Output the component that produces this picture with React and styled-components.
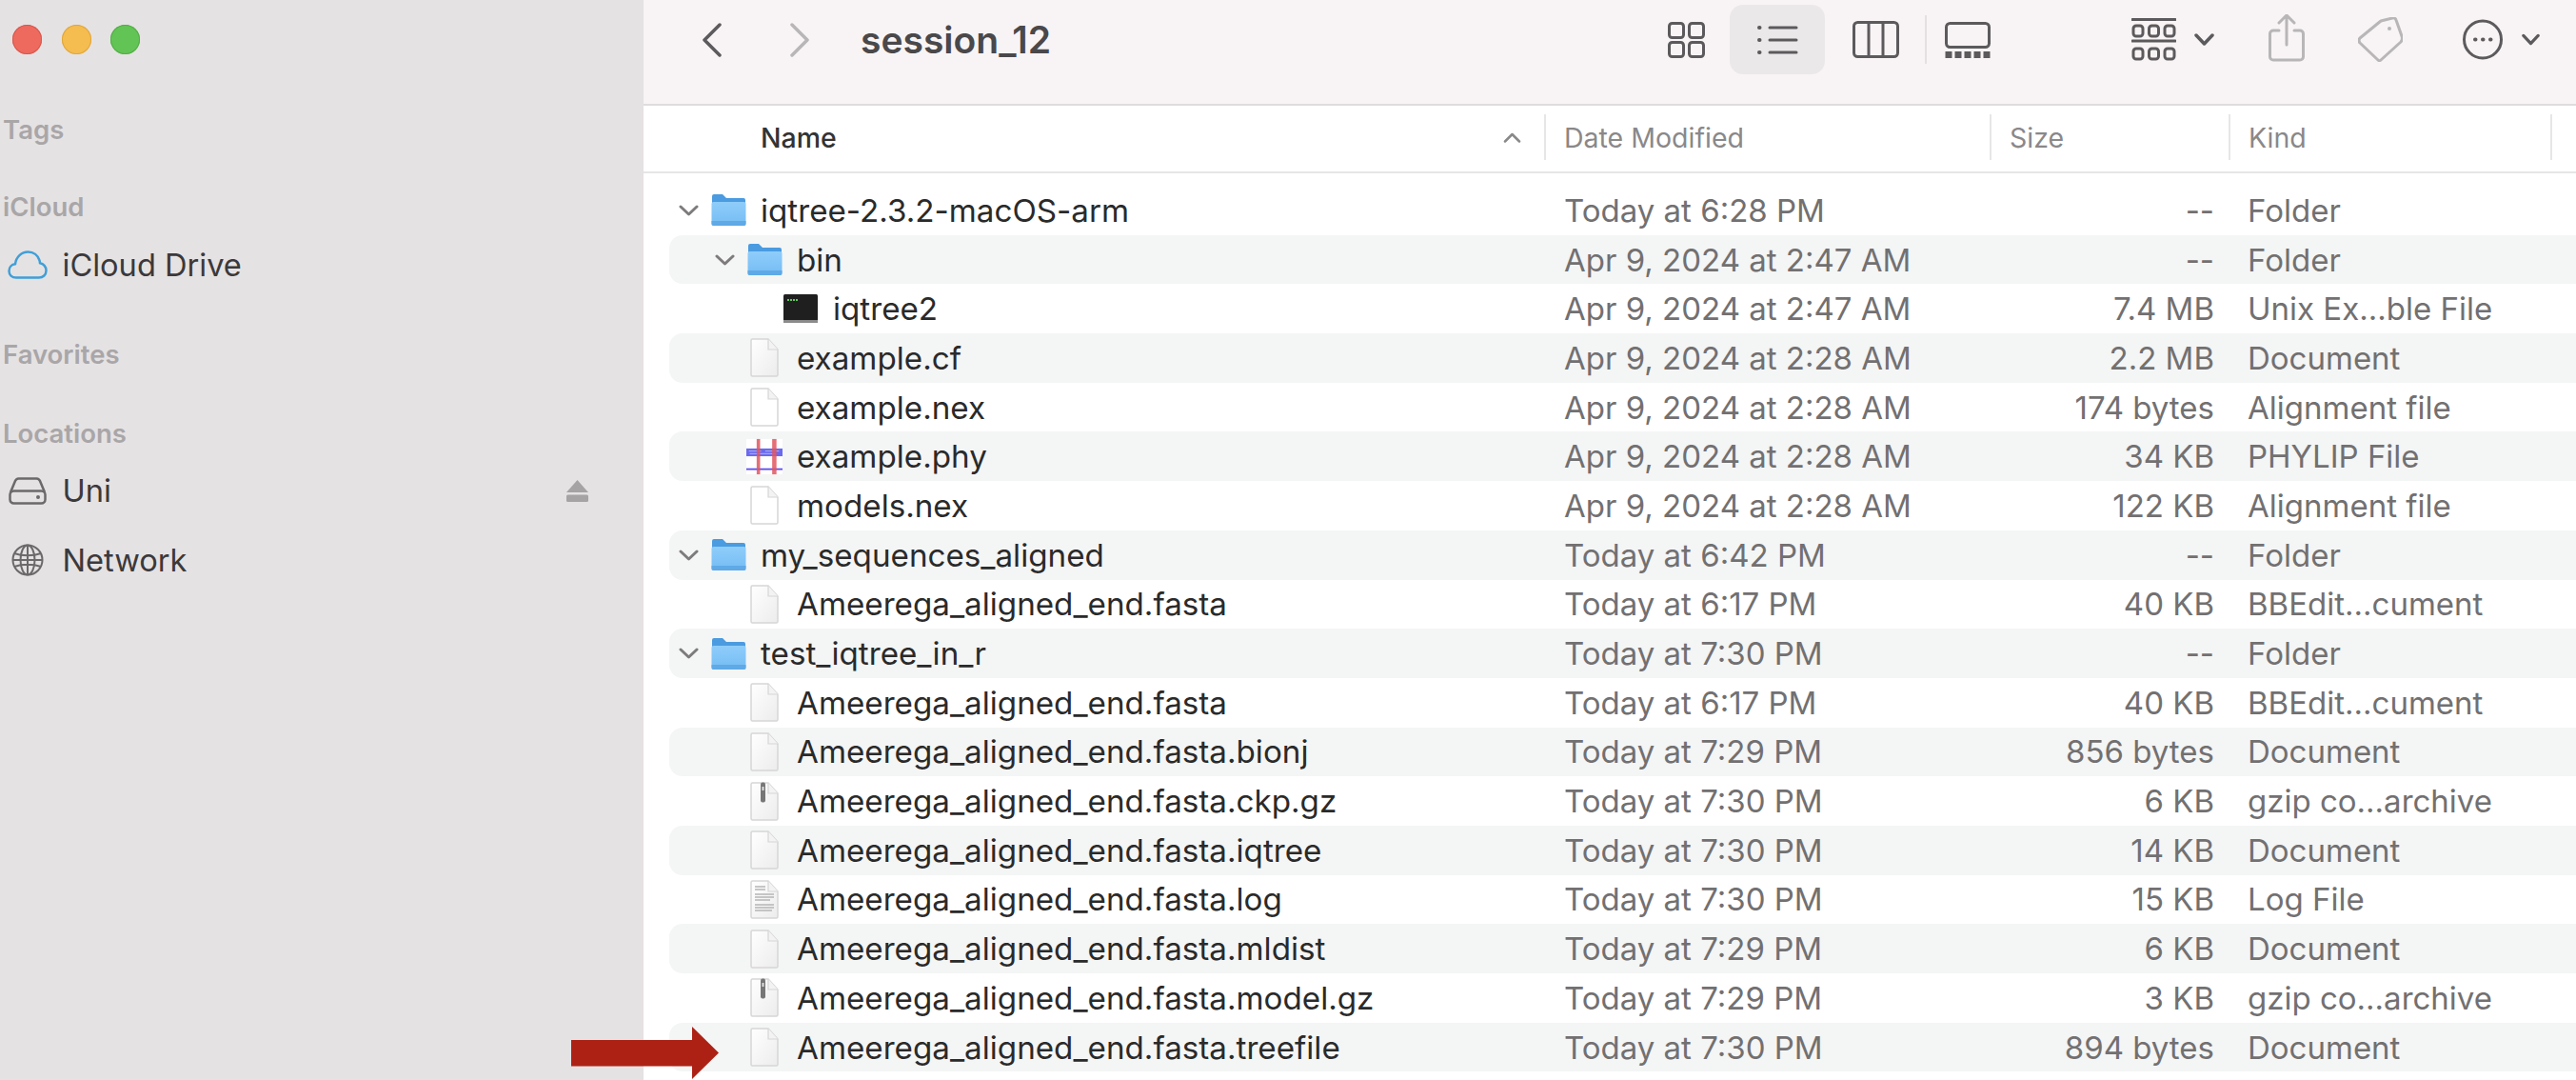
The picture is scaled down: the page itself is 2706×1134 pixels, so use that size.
import styled, { createGlobalStyle } from "styled-components";

const GlobalStyle = createGlobalStyle`
  html, body {
    margin: 0;
    padding: 0;
    height: 100%;
    overflow: hidden;
    background: #fff;
    font-family: Inter, "Liberation Sans", sans-serif;
  }
`;

const Window = styled.div`
  position: relative;
  display: flex;
  width: 2706px;
  height: 1134px;
  overflow: hidden;
`;

const Sidebar = styled.aside`
  flex: 0 0 676px;
  background: #e5e2e3;
`;

const Lights = styled.div`
  display: flex;
  gap: 20.5px;
  padding: 26px 0 0 13px;
`;

const Light = styled.span`
  width: 31px;
  height: 31px;
  border-radius: 50%;
  background: ${(props) => props.$color};
  box-shadow: inset 0 0 0 1px ${(props) => props.$edge};
`;

const SideLabel = styled.div`
  margin-top: ${(props) => props.$top}px;
  padding-left: 3px;
  line-height: 40px;
  font-size: 27.5px;
  font-weight: 600;
  color: #a9a6a8;
`;

const SideItem = styled.div`
  display: flex;
  align-items: center;
  height: 50px;
  margin-top: ${(props) => props.$top}px;
  padding-right: 58px;
  font-size: 32.6px;
  color: #3b393b;
`;

const SideIconSlot = styled.span`
  display: flex;
  justify-content: center;
  width: 57px;
  margin-right: 8.5px;
`;

const Eject = styled.svg`
  margin-left: auto;
`;

const Main = styled.main`
  flex: 1;
  min-width: 0;
`;

const Toolbar = styled.header`
  display: flex;
  align-items: center;
  box-sizing: border-box;
  height: 111px;
  padding: 0 38px 26px 61px;
  background: #f8f4f5;
  border-bottom: 2px solid #dfdcdd;
`;

const Title = styled.h1`
  margin: 0 auto 0 53px;
  font-size: 39px;
  font-weight: 600;
  color: #4a484a;
`;

const ToolIcon = styled.svg`
  flex: none;
  margin-left: ${(props) => props.$left || 0}px;
  fill: none;
  stroke: ${(props) => (props.$dim ? "#b8b6b7" : "#5c5a5c")};
  stroke-width: 3;
  stroke-linecap: round;
  stroke-linejoin: round;
`;

const ActiveTool = styled.div`
  display: flex;
  align-items: center;
  justify-content: center;
  width: 100px;
  height: 73px;
  margin-left: 26px;
  border-radius: 14px;
  background: #ebe8e9;
`;

const ToolDivider = styled.span`
  width: 2px;
  height: 51px;
  margin-left: 27px;
  background: #e3e0e1;
`;

const ColumnHeader = styled.div`
  display: flex;
  align-items: center;
  box-sizing: border-box;
  height: 71px;
  padding-bottom: 3px;
  border-bottom: 2px solid #e6e6e6;
`;

const HeadCell = styled.div`
  display: flex;
  align-items: center;
  box-sizing: border-box;
  width: ${(props) => props.$width}px;
  height: 48px;
  padding-left: ${(props) => props.$pad}px;
  border-left: ${(props) => (props.$first ? "none" : "2px solid #e6e6e6")};
  font-size: 28.5px;
  font-weight: ${(props) => (props.$active ? 500 : 400)};
  color: ${(props) => (props.$active ? "#333" : "#8a8889")};
`;

const SortArrow = styled.svg`
  margin-left: auto;
  margin-right: 24px;
`;

const List = styled.div`
  padding: 13px 0 0 27px;
`;

const Row = styled.div`
  display: grid;
  grid-template-columns: 940px 467px 216px 1fr;
  align-items: center;
  height: 51.7px;
  border-radius: 14px 0 0 14px;
  background: ${(props) => (props.$striped ? "#f4f5f5" : "transparent")};
  font-size: 33px;
  color: #727071;
`;

const NameCell = styled.div`
  display: flex;
  align-items: center;
  padding-left: ${(props) => 10 + props.$depth * 38}px;
  font-size: 33.2px;
  color: #2a2a2a;
`;

const ChevronSlot = styled.span`
  display: flex;
  width: 33px;
`;

const IconSlot = styled.span`
  display: flex;
  justify-content: center;
  width: 38px;
  margin-right: 15px;
`;

const SizeCell = styled.div`
  text-align: right;
`;

const KindCell = styled.div`
  padding-left: 35px;
`;

const Pointer = styled.svg`
  position: absolute;
  left: 600px;
  top: 1078px;
`;

const rows = [
  { depth: 0, name: "iqtree-2.3.2-macOS-arm", icon: "folder", date: "Today at 6:28 PM", size: "--", kind: "Folder" },
  { depth: 1, name: "bin", icon: "folder", date: "Apr 9, 2024 at 2:47 AM", size: "--", kind: "Folder" },
  { depth: 2, name: "iqtree2", icon: "exec", date: "Apr 9, 2024 at 2:47 AM", size: "7.4 MB", kind: "Unix Ex...ble File" },
  { depth: 1, name: "example.cf", icon: "shaded", date: "Apr 9, 2024 at 2:28 AM", size: "2.2 MB", kind: "Document" },
  { depth: 1, name: "example.nex", icon: "plain", date: "Apr 9, 2024 at 2:28 AM", size: "174 bytes", kind: "Alignment file" },
  { depth: 1, name: "example.phy", icon: "thumb", date: "Apr 9, 2024 at 2:28 AM", size: "34 KB", kind: "PHYLIP File" },
  { depth: 1, name: "models.nex", icon: "plain", date: "Apr 9, 2024 at 2:28 AM", size: "122 KB", kind: "Alignment file" },
  { depth: 0, name: "my_sequences_aligned", icon: "folder", date: "Today at 6:42 PM", size: "--", kind: "Folder" },
  { depth: 1, name: "Ameerega_aligned_end.fasta", icon: "shaded", date: "Today at 6:17 PM", size: "40 KB", kind: "BBEdit...cument" },
  { depth: 0, name: "test_iqtree_in_r", icon: "folder", date: "Today at 7:30 PM", size: "--", kind: "Folder" },
  { depth: 1, name: "Ameerega_aligned_end.fasta", icon: "shaded", date: "Today at 6:17 PM", size: "40 KB", kind: "BBEdit...cument" },
  { depth: 1, name: "Ameerega_aligned_end.fasta.bionj", icon: "shaded", date: "Today at 7:29 PM", size: "856 bytes", kind: "Document" },
  { depth: 1, name: "Ameerega_aligned_end.fasta.ckp.gz", icon: "zip", date: "Today at 7:30 PM", size: "6 KB", kind: "gzip co...archive" },
  { depth: 1, name: "Ameerega_aligned_end.fasta.iqtree", icon: "shaded", date: "Today at 7:30 PM", size: "14 KB", kind: "Document" },
  { depth: 1, name: "Ameerega_aligned_end.fasta.log", icon: "log", date: "Today at 7:30 PM", size: "15 KB", kind: "Log File" },
  { depth: 1, name: "Ameerega_aligned_end.fasta.mldist", icon: "shaded", date: "Today at 7:29 PM", size: "6 KB", kind: "Document" },
  { depth: 1, name: "Ameerega_aligned_end.fasta.model.gz", icon: "zip", date: "Today at 7:29 PM", size: "3 KB", kind: "gzip co...archive" },
  { depth: 1, name: "Ameerega_aligned_end.fasta.treefile", icon: "shaded", date: "Today at 7:30 PM", size: "894 bytes", kind: "Document" },
];

function FolderIcon() {
  return (
    <svg width="37" height="35" viewBox="0 0 37 35">
      <defs>
        <linearGradient id="folderBody" x1="0" y1="0" x2="0" y2="1">
          <stop offset="0" stopColor="#8fcdfa" />
          <stop offset="1" stopColor="#74bcf4" />
        </linearGradient>
      </defs>
      <path d="M1 9V3a2 2 0 0 1 2-2h9l4 4h18a2 2 0 0 1 2 2v4H1z" fill="#4a9be0" />
      <rect x="0.5" y="9" width="36" height="25" rx="2" fill="url(#folderBody)" />
      <path d="M.5 29h36v3a2 2 0 0 1-2 2h-32a2 2 0 0 1-2-2z" fill="#5ea9e6" />
    </svg>
  );
}

function ExecIcon() {
  return (
    <svg width="36" height="30" viewBox="0 0 36 30">
      <rect x="0" y="0" width="36" height="30" rx="1.5" fill="#1f1f1f" />
      <rect x="0" y="27" width="36" height="3" fill="#8b8b8b" />
      <path d="M4 6h11" stroke="#5fc85a" strokeWidth="2" strokeDasharray="2 1" />
    </svg>
  );
}

function ThumbIcon() {
  return (
    <svg width="42" height="41" viewBox="0 0 42 41">
      <rect width="42" height="41" fill="#fff" />
      <rect y="11" width="42" height="9" fill="#6a6af0" />
      <path d="M3 14h14M22 14h16M4 17h30" stroke="#b9b9f5" strokeWidth="1" />
      <rect y="34" width="42" height="2" fill="#5a4cf0" />
      <rect x="12" width="4" height="41" fill="#e0565e" opacity="0.85" />
      <rect x="30" width="5" height="41" fill="#e0565e" opacity="0.85" />
    </svg>
  );
}

function DocIcon({ kind }) {
  const fillId = `doc-${kind}`;
  return (
    <svg width="32" height="41" viewBox="0 0 32 41">
      <defs>
        <linearGradient id={fillId} x1="0" y1="0" x2="1" y2="1">
          <stop offset="0" stopColor="#fff" />
          <stop offset="1" stopColor={kind === "plain" ? "#fff" : "#ececec"} />
        </linearGradient>
      </defs>
      <path
        d="M2 2.500a1.500 1.500 0 0 1 1.500-1.500H20l10 11v26.500a1.500 1.500 0 0 1-1.500 1.500h-25A1.500 1.500 0 0 1 2 38.500z"
        fill={`url(#${fillId})`}
        stroke="#d6d6d6"
        strokeWidth="1.5"
      />
      <path d="M20 1v11h10" fill="#f3f3f3" stroke="#d6d6d6" strokeWidth="1.200" />
      {kind === "zip" && (
        <>
          <rect x="12" y="0.500" width="5" height="21" rx="2" fill="#777" />
          <rect x="13.500" y="5" width="2" height="4" fill="#ddd" />
        </>
      )}
      {kind === "log" && (
        <path
          d="M6 7h11M6 10h11M6 15h20M6 18h20M6 21h16M6 26h20M6 29h20M6 32h18"
          stroke="#b5b5b5"
          strokeWidth="1.500"
        />
      )}
    </svg>
  );
}

function RowIcon({ icon }) {
  if (icon === "folder") return <FolderIcon />;
  if (icon === "exec") return <ExecIcon />;
  if (icon === "thumb") return <ThumbIcon />;
  return <DocIcon kind={icon} />;
}

function Disclosure() {
  return (
    <svg width="21" height="12" viewBox="0 0 21 12" fill="none" stroke="#7d7b7c" strokeWidth="3" strokeLinecap="round" strokeLinejoin="round">
      <path d="M2 2l8.500 8L19 2" />
    </svg>
  );
}

function ToolChevron({ left, width }) {
  return (
    <ToolIcon $left={left} width={width} height="13" viewBox="0 0 21 13">
      <path d="M2 2l8.500 9L19 2" strokeWidth="3.500" />
    </ToolIcon>
  );
}

export default function App() {
  return (
    <Window>
      <GlobalStyle />
      <Sidebar>
        <Lights>
          <Light $color="#ee6a5f" $edge="#d8574c" />
          <Light $color="#f5bd4f" $edge="#dfa63c" />
          <Light $color="#61c454" $edge="#52ad46" />
        </Lights>
        <SideLabel $top={59}>Tags</SideLabel>
        <SideLabel $top={41}>iCloud</SideLabel>
        <SideItem $top={16}>
          <SideIconSlot>
            <svg width="42" height="30" viewBox="0 0 42 30" fill="none" stroke="#3f9fd8" strokeWidth="2.500" strokeLinejoin="round">
              <path d="M9 28.500C4.500 28.500 1.500 25.500 1.500 21.500c0-3.800 2.800-6.800 6.500-7.200C8.800 7 14.500 1.500 21.500 1.500c5.800 0 10.400 3.700 12 8.800 .3 1 .4 2 .5 3 3.700.5 6.500 3.800 6.500 7.700 0 4.700-3.500 7.500-7.500 7.500z" />
            </svg>
          </SideIconSlot>
          iCloud Drive
        </SideItem>
        <SideLabel $top={49}>Favorites</SideLabel>
        <SideLabel $top={43}>Locations</SideLabel>
        <SideItem $top={15}>
          <SideIconSlot>
            <svg width="40" height="29" viewBox="0 0 40 29" fill="none" stroke="#6b696a" strokeWidth="2.500" strokeLinejoin="round">
              <path d="M2 16L7 4a4 4 0 0 1 3.500-2.500h19A4 4 0 0 1 33 4l5 12" />
              <rect x="1.500" y="14.500" width="37" height="13" rx="4" />
              <circle cx="31" cy="21" r="2" fill="#6b696a" stroke="none" />
            </svg>
          </SideIconSlot>
          Uni
          <Eject width="23" height="23" viewBox="0 0 23 23" fill="#a5a3a4">
            <path d="M11.500 0L23 13H0z" />
            <rect y="15.500" width="23" height="7.500" rx="1.500" />
          </Eject>
        </SideItem>
        <SideItem $top={23}>
          <SideIconSlot>
            <svg width="34" height="34" viewBox="0 0 34 34" fill="none" stroke="#6b696a" strokeWidth="2">
              <circle cx="17" cy="17" r="15.500" />
              <ellipse cx="17" cy="17" rx="7.500" ry="15.500" />
              <path d="M17 1.500v31M3 10c8 3 20 3 28 0M3 24c8-3 20-3 28 0M1.500 17h31" />
            </svg>
          </SideIconSlot>
          Network
        </SideItem>
      </Sidebar>
      <Main>
        <Toolbar>
          <ToolIcon width="21" height="36" viewBox="0 0 21 36">
            <path d="M19 2L3 18l16 16" strokeWidth="3.500" />
          </ToolIcon>
          <ToolIcon $left={72} $dim width="21" height="36" viewBox="0 0 21 36">
            <path d="M2 2l16 16L2 34" strokeWidth="3.500" />
          </ToolIcon>
          <Title>session_12</Title>
          <ToolIcon width="39" height="38" viewBox="0 0 39 38">
            <rect x="1.500" y="1.500" width="15" height="15" rx="3" />
            <rect x="22.500" y="1.500" width="15" height="15" rx="3" />
            <rect x="1.500" y="21.500" width="15" height="15" rx="3" />
            <rect x="22.500" y="21.500" width="15" height="15" rx="3" />
          </ToolIcon>
          <ActiveTool>
            <ToolIcon width="43" height="32" viewBox="0 0 43 32">
              <path d="M2 3h.5M2 16h.5M2 29h.5" strokeWidth="4" />
              <path d="M13 3h28M13 16h28M13 29h28" />
            </ToolIcon>
          </ActiveTool>
          <ToolIcon $left={29} width="49" height="39" viewBox="0 0 49 39">
            <rect x="1.500" y="1.500" width="46" height="36" rx="4" />
            <path d="M17 1.500v36M32 1.500v36" />
          </ToolIcon>
          <ToolDivider />
          <ToolIcon $left={19} width="48" height="38" viewBox="0 0 48 38">
            <rect x="1.500" y="1.500" width="45" height="25" rx="4" />
            <path d="M0.500 34.500h47" strokeWidth="7" strokeLinecap="butt" strokeDasharray="7 3" />
          </ToolIcon>
          <ToolIcon $left={148} width="47" height="45" viewBox="0 0 47 45">
            <path d="M1 1.500h45M1 24h45" />
            <rect x="2" y="8" width="10" height="11" rx="3" />
            <rect x="18.500" y="8" width="10" height="11" rx="3" />
            <rect x="35" y="8" width="10" height="11" rx="3" />
            <rect x="2" y="32" width="10" height="11" rx="3" />
            <rect x="18.500" y="32" width="10" height="11" rx="3" />
            <rect x="35" y="32" width="10" height="11" rx="3" />
          </ToolIcon>
          <ToolChevron left={19} width="21" />
          <ToolIcon $left={57} $dim width="38" height="54" viewBox="0 0 38 54">
            <path d="M11 17H5a3.500 3.500 0 0 0-3.500 3.500v24A3.500 3.500 0 0 0 5 48h28a3.500 3.500 0 0 0 3.500-3.500v-24A3.500 3.500 0 0 0 33 17h-6" />
            <path d="M19 32V2M11 9l8-8 8 8" />
          </ToolIcon>
          <ToolIcon $left={56} $dim width="47" height="47" viewBox="0 0 47 47">
            <path d="M24 4l12-3a3 3 0 0 1 4 2l6 17a6 6 0 0 1-1 6L24 45a2 2 0 0 1-3 0L2 27a4 4 0 0 1 0-5z" />
            <circle cx="33" cy="12" r="2" fill="#b8b6b7" stroke="none" />
          </ToolIcon>
          <ToolIcon $left={63} width="42" height="43" viewBox="0 0 42 43">
            <circle cx="21" cy="21.500" r="19.500" />
            <path d="M13 21.500h.5M21 21.500h.5M29 21.500h.5" strokeWidth="4" />
          </ToolIcon>
          <ToolChevron left={20} width="19" />
        </Toolbar>
        <ColumnHeader>
          <HeadCell $first $active $width={946} $pad={123}>
            Name
            <SortArrow width="19" height="11" viewBox="0 0 19 11" fill="none" stroke="#8a8889" strokeWidth="2.500" strokeLinecap="round" strokeLinejoin="round">
              <path d="M2 9.500L9.500 2 17 9.500" />
            </SortArrow>
          </HeadCell>
          <HeadCell $width={468} $pad={19}>Date Modified</HeadCell>
          <HeadCell $width={251} $pad={19}>Size</HeadCell>
          <HeadCell $width={338} $pad={19}>Kind</HeadCell>
          <HeadCell $width={20} $pad={0} />
        </ColumnHeader>
        <List>
          {rows.map((row, index) => (
            <Row key={index} $striped={index % 2 === 1}>
              <NameCell $depth={row.depth}>
                <ChevronSlot>{row.icon === "folder" && <Disclosure />}</ChevronSlot>
                <IconSlot>
                  <RowIcon icon={row.icon} />
                </IconSlot>
                {row.name}
              </NameCell>
              <div>{row.date}</div>
              <SizeCell>{row.size}</SizeCell>
              <KindCell>{row.kind}</KindCell>
            </Row>
          ))}
        </List>
      </Main>
      <Pointer width="155" height="56" viewBox="0 0 155 56">
        <path d="M0 14h127V0l28 27.500L127 55V41.500H0z" fill="#ad2115" />
      </Pointer>
    </Window>
  );
}
